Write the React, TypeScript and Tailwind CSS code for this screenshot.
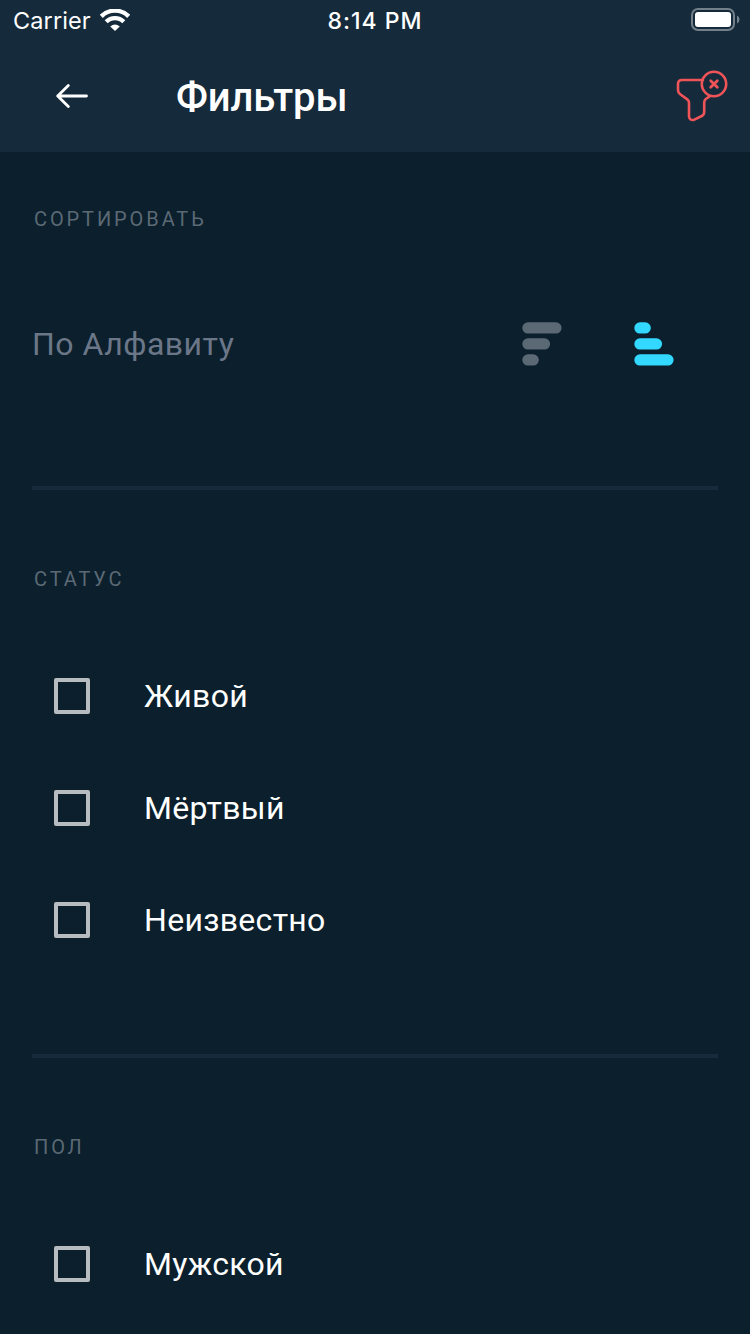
import React from "react";

function StatusBar() {
  return (
    <div className="flex h-10 items-center justify-between pl-[13px] pr-[10px] font-['Inter',sans-serif] text-white">
      <div className="flex w-[200px] items-center gap-[9px]">
        <span className="w-[78px] pt-0.5 text-[23.5px] leading-10 tracking-[0.1px]">Carrier</span>
        <svg width="30" height="22" viewBox="0 0 30 22" fill="none" stroke="#fff">
          <path d="M1.3 7.4 A19.2 19.2 0 0 1 28.7 7.4" strokeWidth="4.4" />
          <path d="M6.2 12.8 A12.2 12.2 0 0 1 23.8 12.8" strokeWidth="4.2" />
          <path d="M10.2 17.6 Q15 13.2 19.8 17.6 L15 22 Z" fill="#fff" stroke="none" />
        </svg>
      </div>
      <span className="mr-[3px] pt-0.5 text-[23px] font-medium leading-10 tracking-[1px]">8:14 PM</span>
      <div className="flex w-[200px] justify-end">
        <svg width="49" height="24" viewBox="0 0 49 24" fill="none">
          <rect x="1" y="1" width="42" height="21" rx="6" stroke="#73808a" strokeWidth="2" />
          <rect x="4" y="4" width="36" height="15" rx="3" fill="#fff" />
          <path d="M46 7.5 Q48.5 8.7 48.5 11.5 Q48.5 14.3 46 15.5 Z" fill="#73808a" />
        </svg>
      </div>
    </div>
  );
}

function Header() {
  return (
    <header className="h-[152px] bg-[#152a3a]">
      <StatusBar />
      <div className="flex h-28 items-center pl-14 pr-[22px]">
        <svg width="32" height="24" viewBox="0 0 32 24" fill="none" stroke="#fff" strokeWidth="2.8" strokeLinecap="round" strokeLinejoin="round">
          <path d="M30.5 12 H1.7 M12.3 1.5 L1.7 12 L12.3 22.5" />
        </svg>
        <h1 className="ml-[88px] flex-1 pt-1 text-[40px] font-medium leading-[48px] tracking-[-0.1px] text-white">Фильтры</h1>
        <svg width="52" height="52" viewBox="0 0 52 52" fill="none" stroke="#ef5459" strokeWidth="2.6" strokeLinecap="round" strokeLinejoin="round">
          <path d="M27 10 H6 Q2 10 2 14 V20 Q2 22.7 4.2 24.3 L11.3 29.4 Q13 30.6 13 32.8 V46.3 Q13.5 51 18.3 49.7 L25.8 46 Q28.2 44.8 28.2 42 V32.5 Q28.2 30.3 29.8 29 L34 26.2" />
          <circle cx="38" cy="14" r="12.2" />
          <path d="M34.7 10.7 L41.3 17.3 M41.3 10.7 L34.7 17.3" strokeWidth="2.8" />
        </svg>
      </div>
    </header>
  );
}

function SectionLabel({ children }: { children: React.ReactNode }) {
  return (
    <h2 className="pl-0.5 text-[20px] font-normal leading-8 tracking-[2.9px] text-[#5b6975]">{children}</h2>
  );
}

function SortBars({ widths, color }: { widths: number[]; color: string }) {
  return (
    <svg width="40" height="44" viewBox="0 0 40 44" fill={color}>
      {widths.map((w, i) => (
        <rect key={w} x="0.3" y={0.3 + i * 16} width={w} height="11.3" rx="5.65" />
      ))}
    </svg>
  );
}

function Option({ label }: { label: string }) {
  return (
    <label className="flex h-28 items-center gap-[54px] pl-[22px]">
      <span className="size-9 rounded-[2px] border-4 border-[#b6bcc0]" />
      <span className="text-[32px] leading-10 tracking-[0.3px] text-white">{label}</span>
    </label>
  );
}

function Divider() {
  return <div className="h-1 w-full bg-[#152a3a]" />;
}

export default function App() {
  return (
    <div className="h-[1334px] w-full overflow-hidden bg-[#0b1f2c] font-['Roboto',sans-serif]">
      <Header />
      <main className="px-8">
        <section className="h-[334px] pt-[51px]">
          <SectionLabel>СОРТИРОВАТЬ</SectionLabel>
          <div className="mt-[85px] flex h-12 items-center">
            <span className="flex-1 text-[32px] leading-10 tracking-[0.5px] text-[#6b7788]">По Алфавиту</span>
            <div className="flex gap-[72px] pr-11">
              <SortBars widths={[39.3, 27.8, 16.5]} color="#5b6975" />
              <SortBars widths={[16.5, 27.8, 39.3]} color="#32d8ff" />
            </div>
          </div>
        </section>
        <Divider />
        <section className="h-[564px] pt-[73px]">
          <SectionLabel>СТАТУС</SectionLabel>
          <div className="pt-[45px]">
            <Option label="Живой" />
            <Option label="Мёртвый" />
            <Option label="Неизвестно" />
          </div>
        </section>
        <Divider />
        <section className="pt-[73px]">
          <SectionLabel>ПОЛ</SectionLabel>
          <div className="pt-[45px]">
            <Option label="Мужской" />
          </div>
        </section>
      </main>
    </div>
  );
}
